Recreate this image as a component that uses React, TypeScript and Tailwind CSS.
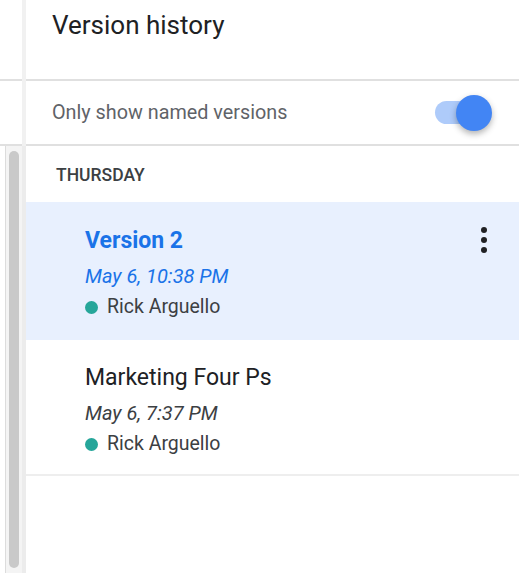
import React from 'react';

const versions = [
  { name: 'Version 2', time: 'May 6, 10:38 PM', author: 'Rick Arguello', selected: true },
  { name: 'Marketing Four Ps', time: 'May 6, 7:37 PM', author: 'Rick Arguello', selected: false },
];

function Toggle() {
  return (
    <div className="relative w-[58px] h-[38px] flex items-center">
      <div className="w-[42px] h-[23px] rounded-full bg-[#aecbfa]" />
      <div className="absolute left-[21px] top-[1px] w-[36px] h-[36px] rounded-full bg-[#4285f4] shadow-[0_3px_6px_rgba(0,0,0,0.3)]" />
    </div>
  );
}

function Kebab() {
  return (
    <div className="flex flex-col items-center gap-[4px] pt-[1px] pr-[32px]">
      <span className="w-[6px] h-[6px] rounded-full bg-[#202124]" />
      <span className="w-[6px] h-[6px] rounded-full bg-[#202124]" />
      <span className="w-[6px] h-[6px] rounded-full bg-[#202124]" />
    </div>
  );
}

export default function App() {
  return (
    <div className="w-[519px] h-[573px] flex bg-white overflow-hidden font-['Roboto','Liberation_Sans',sans-serif]">
      {/* left gutter with scrollbar */}
      <div className="w-[26px] flex flex-col">
        <div className="h-[146px] flex">
          <div className="w-[22px] flex flex-col">
            <div className="h-[81px] border-b-2 border-[#e0e0e0]" />
            <div className="flex-1 border-b-2 border-[#e0e0e0]" />
          </div>
          <div className="w-[4px] bg-[#f1f1f1]" />
        </div>
        <div className="flex-1 flex">
          <div className="w-[6px] border-r border-[#dcdcdc] bg-white" />
          <div className="w-[16px] bg-[#f4f4f4] px-[3px] py-[5px]">
            <div className="h-full rounded-[5px] bg-[#c9c9c9]" />
          </div>
          <div className="w-[4px] bg-[#ececec]" />
        </div>
      </div>

      {/* main panel */}
      <div className="flex-1 flex flex-col">
        <div className="h-[81px] border-b-2 border-[#e0e0e0] pl-[26px] pt-[7px]">
          <h1 className="text-[26px] leading-[36px] text-[#202124]">Version history</h1>
        </div>
        <div className="h-[65px] border-b-2 border-[#e0e0e0] flex items-center justify-between pl-[26px] pr-[26px]">
          <span className="text-[19.8px] text-[#5f6368]">Only show named versions</span>
          <Toggle />
        </div>
        <div className="h-[56px] pl-[30px] pt-[16px]">
          <span className="text-[17.5px] font-medium text-[#3c4043]">THURSDAY</span>
        </div>
        {versions.map((v) => (
          <div
            key={v.name}
            className={`flex justify-between ${v.selected ? 'bg-[#e8f0fe] h-[138px] pt-[24px]' : 'bg-white h-[136px] pt-[23px] border-b-2 border-[#eeeeee]'}`}
          >
            <div className="pl-[59px] flex flex-col">
              <span className={`text-[23px] leading-[30px] ${v.selected ? 'font-bold text-[#1a73e8]' : 'text-[#202124]'}`}>
                {v.name}
              </span>
              <span className={`text-[20px] italic leading-[26px] mt-[7px] ${v.selected ? 'text-[#1a73e8]' : 'text-[#3c4043]'}`}>
                {v.time}
              </span>
              <div className="flex items-center gap-[9px] mt-[5px]">
                <span className="w-[13px] h-[13px] rounded-full bg-[#26a69a]" />
                <span className="text-[19.5px] leading-[26px] text-[#3c4043]">{v.author}</span>
              </div>
            </div>
            {v.selected && <Kebab />}
          </div>
        ))}
      </div>
    </div>
  );
}
